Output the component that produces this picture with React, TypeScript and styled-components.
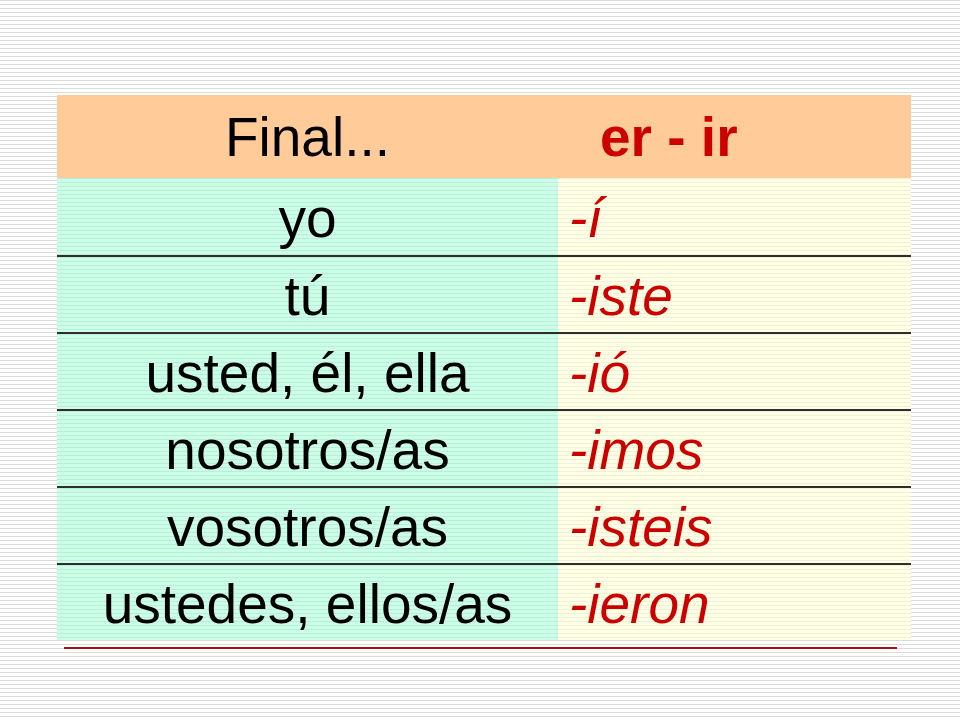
import React from "react";
import styled, { createGlobalStyle } from "styled-components";

const Global = createGlobalStyle`
  html, body {
    margin: 0;
    padding: 0;
  }
  body {
    width: 960px;
    height: 720px;
    overflow: hidden;
    background: repeating-linear-gradient(to bottom, #dcdcdc 0 1px, #ffffff 1px 4px);
    font-family: "Liberation Sans", Arial, sans-serif;
  }
`;

const Slide = styled.div`
  width: 960px;
  height: 720px;
  box-sizing: border-box;
  padding: 95px 0 0 57px;
  display: flex;
  flex-direction: column;
`;

const Table = styled.div`
  width: 854px;
  display: grid;
  grid-template-columns: 501px 353px;
`;

const HeaderCell = styled.div<{ $right?: boolean }>`
  height: 83px;
  background: #ffcc99;
  display: flex;
  align-items: center;
  justify-content: ${(p) => (p.$right ? "flex-start" : "center")};
  padding-left: ${(p) => (p.$right ? "42px" : "0")};
  font-size: 55px;
  color: ${(p) => (p.$right ? "#cc0000" : "#000")};
  font-weight: ${(p) => (p.$right ? 700 : 400)};
  box-sizing: border-box;
`;

const Cell = styled.div<{ $ending?: boolean; $first?: boolean }>`
  height: 77px;
  box-sizing: border-box;
  border-top: ${(p) => (p.$first ? "none" : "2px solid #2e2e2e")};
  display: flex;
  align-items: center;
  justify-content: ${(p) => (p.$ending ? "flex-start" : "center")};
  padding-left: ${(p) => (p.$ending ? "11px" : "0")};
  padding-top: 2px;
  font-size: 55px;
  font-style: ${(p) => (p.$ending ? "italic" : "normal")};
  color: ${(p) => (p.$ending ? "#cc0000" : "#000")};
  background: ${(p) =>
    p.$ending
      ? "repeating-linear-gradient(to bottom, #f1f1d6 0 1px, #ffffe6 1px 4px)"
      : "repeating-linear-gradient(to bottom, #b8efd6 0 1px, #ccfde8 1px 4px)"};
`;

const RedRule = styled.div`
  margin: 7px 0 0 7px;
  width: 833px;
  height: 2px;
  background: #a31010;
`;

const rows: [string, string][] = [
  ["yo", "-í"],
  ["tú", "-iste"],
  ["usted, él, ella", "-ió"],
  ["nosotros/as", "-imos"],
  ["vosotros/as", "-isteis"],
  ["ustedes, ellos/as", "-ieron"],
];

export default function App() {
  return (
    <>
      <Global />
      <Slide>
        <Table>
          <HeaderCell>Final...</HeaderCell>
          <HeaderCell $right>er - ir</HeaderCell>
          {rows.map(([p, e], i) => (
            <React.Fragment key={p}>
              <Cell $first={i === 0}>{p}</Cell>
              <Cell $first={i === 0} $ending>
                {e}
              </Cell>
            </React.Fragment>
          ))}
        </Table>
        <RedRule />
      </Slide>
    </>
  );
}
